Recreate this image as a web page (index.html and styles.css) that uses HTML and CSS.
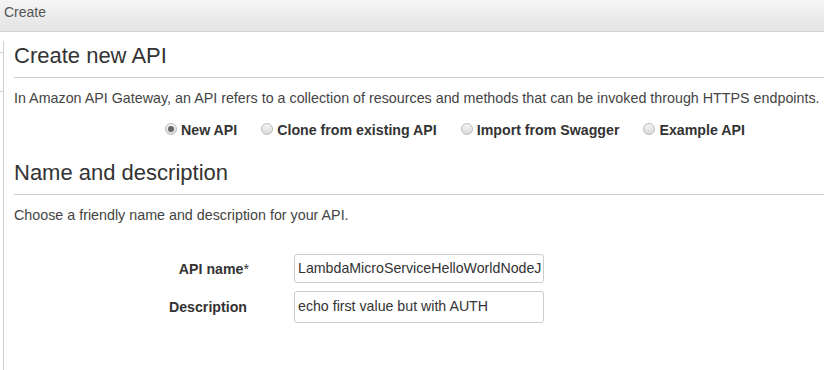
FILE: index.html
```html
<!DOCTYPE html>
<html lang="en">
<head>
    <meta charset="UTF-8">
    <title>Create new API</title>
    <link rel="stylesheet" href="styles.css">
</head>
<body>
    <div class="topbar">Create</div>
    <div class="page">
        <div class="rail">
            <span class="tick tick-one"></span>
            <span class="tick tick-two"></span>
        </div>
        <div class="content">
            <h2 class="section-title">Create new API</h2>
            <p class="intro">In Amazon API Gateway, an API refers to a collection of resources and methods that can be invoked through HTTPS endpoints.</p>
            <div class="choices">
                <label class="choice"><span class="radio checked"></span>New API</label>
                <label class="choice"><span class="radio"></span>Clone from existing API</label>
                <label class="choice"><span class="radio"></span>Import from Swagger</label>
                <label class="choice"><span class="radio"></span>Example API</label>
            </div>

            <h2 class="section-title second">Name and description</h2>
            <p class="intro">Choose a friendly name and description for your API.</p>

            <div class="form">
                <div class="row">
                    <div class="label name-label">API name<span class="star">*</span></div>
                    <div class="field">LambdaMicroServiceHelloWorldNodeJ</div>
                </div>
                <div class="row">
                    <div class="label">Description</div>
                    <div class="field tall">echo first value but with AUTH</div>
                </div>
            </div>
        </div>
    </div>
</body>
</html>
```

FILE: styles.css
```css
body {
    margin: 0;
    font-family: 'Liberation Sans', Arial, sans-serif;
    color: #444;
    background-color: #fff;
    overflow: hidden;
}
.topbar {
    height: 31px;
    line-height: 24px;
    padding-left: 4px;
    font-size: 14px;
    color: #555;
    background: linear-gradient(#f5f5f5, #e3e3e3);
    border-bottom: 1px solid #d4d4d4;
}
.page {
    display: flex;
    height: 338px;
}
.rail {
    width: 3px;
    margin-top: 9px;
    border-right: 1px solid #d0d0d0;
    position: relative;
}
.tick {
    position: absolute;
    left: 0;
    width: 3px;
    height: 1px;
    background-color: #d0d0d0;
}
.tick-one {
    top: 11px;
}
.tick-two {
    top: 50px;
}
.content {
    flex: 1;
    padding-left: 10px;
}
.section-title {
    margin: 12px 0 0 0;
    padding-bottom: 9px;
    font-size: 22px;
    font-weight: normal;
    color: #333;
    border-bottom: 1px solid #ccc;
    line-height: 24px;
}
.section-title.second {
    margin-top: 23px;
}
.intro {
    margin: 12px 0 0 0;
    font-size: 14.3px;
    line-height: 16px;
}
.choices {
    display: flex;
    margin: 16px 0 0 151px;
    font-size: 14.2px;
    font-weight: bold;
    color: #333;
}
.choice {
    display: flex;
    align-items: center;
    margin-right: 24px;
}
.radio {
    width: 12px;
    height: 12px;
    margin-right: 4px;
    border: 1px solid #bbb;
    border-radius: 50%;
    background: linear-gradient(#f4f4f4, #dadada);
    box-sizing: border-box;
    position: relative;
    top: -1px;
}
.radio.checked::after {
    content: "";
    position: absolute;
    top: 2px;
    left: 2px;
    width: 6px;
    height: 6px;
    border-radius: 50%;
    background-color: #666;
}
.form {
    margin-top: 31px;
    display: flex;
    flex-direction: column;
    gap: 8px;
}
.row {
    display: flex;
    align-items: center;
}
.label {
    width: 280px;
    text-align: right;
    font-size: 14.2px;
    font-weight: bold;
    color: #333;
    padding-right: 47px;
    box-sizing: border-box;
}
.name-label {
    padding-right: 45px;
}
.star {
    font-weight: normal;
}
.field {
    width: 250px;
    height: 29px;
    box-sizing: border-box;
    border: 1px solid #ccc;
    border-radius: 3px;
    padding: 0 3px;
    font-size: 14.2px;
    line-height: 27px;
    color: #333;
    overflow: hidden;
    white-space: nowrap;
}
.field.tall {
    height: 32px;
    line-height: 29px;
}
```
